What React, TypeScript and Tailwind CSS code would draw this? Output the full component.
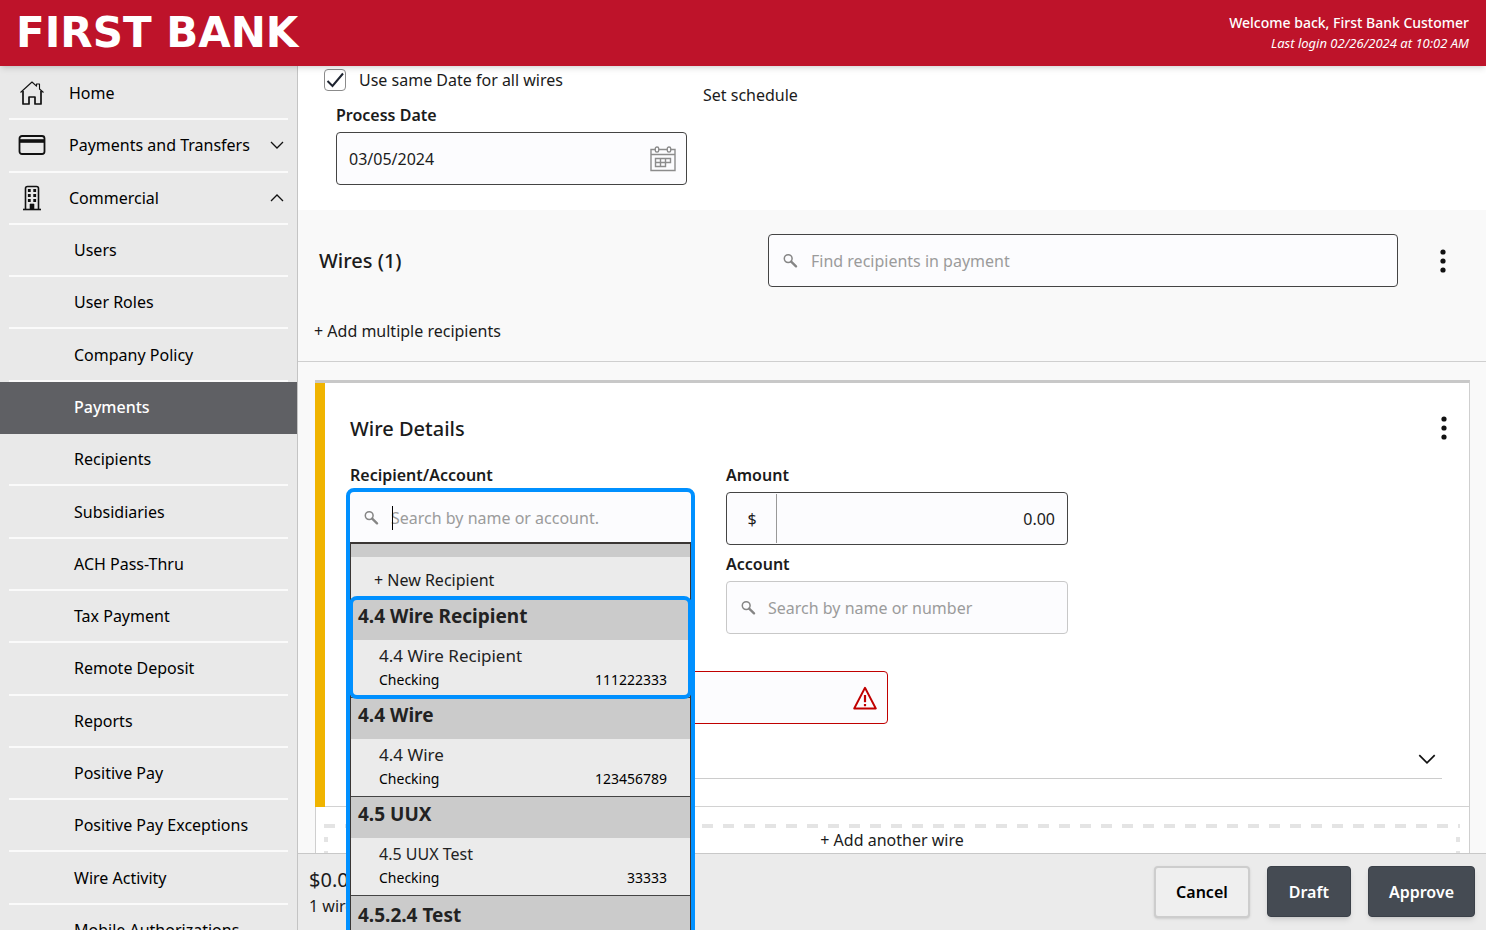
import { useState } from "react";

const subItems = [
  "Users",
  "User Roles",
  "Company Policy",
  "Payments",
  "Recipients",
  "Subsidiaries",
  "ACH Pass-Thru",
  "Tax Payment",
  "Remote Deposit",
  "Reports",
  "Positive Pay",
  "Positive Pay Exceptions",
  "Wire Activity",
  "Mobile Authorizations",
];

const recipients = [
  { group: "4.4 Wire Recipient", name: "4.4 Wire Recipient", type: "Checking", account: "111222333", large: true },
  { group: "4.4 Wire", name: "4.4 Wire", type: "Checking", account: "123456789", large: true },
  { group: "4.5 UUX", name: "4.5 UUX Test", type: "Checking", account: "33333", large: false },
];

const HomeIcon = () => (
  <svg width="26" height="26" viewBox="0 0 26 26" fill="none" stroke="#111" strokeLinejoin="round">
    <path d="M1.5 12.5 13 2l4.5 4.2V4h3v5l4 3.5" strokeWidth="1.1" />
    <path d="M4 11v13h6v-7h6v7h6V11" strokeWidth="1.7" />
  </svg>
);

const CardIcon = () => (
  <svg width="28" height="20" viewBox="0 0 28 20" fill="none" stroke="#111">
    <rect x="1.5" y="1" width="25" height="18" rx="2.5" strokeWidth="1.8" />
    <path d="M1 6h26" strokeWidth="3.6" />
  </svg>
);

const BuildingIcon = () => (
  <svg width="20" height="26" viewBox="0 0 20 26" fill="none" stroke="#111">
    <path d="M3.5 24V3.5q0-2 2-2h9q2 0 2 2V24" strokeWidth="1.6" />
    <path d="M1 24.5h18" strokeWidth="1.6" />
    <path d="M8 24v-5h4v5z" fill="#111" strokeWidth="0.6" />
    <path d="M7.3 4v3M12.7 4v3M7.3 9v3M12.7 9v3M7.3 14v3M12.7 14v3" strokeWidth="2.8" />
  </svg>
);

const Chevron = ({ up = false, size = 14 }: { up?: boolean; size?: number }) => (
  <svg width={size} height={size} viewBox="0 0 14 14" fill="none" stroke="#111" strokeWidth="1.3" className={up ? "rotate-180" : ""}>
    <path d="M1 4l6 6 6-6" />
  </svg>
);

const SearchIcon = () => (
  <svg width="15" height="15" viewBox="0 0 15 15" fill="none" stroke="#858585" className="shrink-0">
    <circle cx="5.2" cy="5.6" r="3.9" strokeWidth="1.5" />
    <path d="M8.2 8.6l4.8 4.8" strokeWidth="2.3" strokeLinecap="round" />
  </svg>
);

const CalendarIcon = () => (
  <svg width="26" height="26" viewBox="0 0 26 26" fill="none" stroke="#8c8c8c" strokeWidth="1.4">
    <path d="M5 3.5H1v21h24v-21h-4M9 3.5h8M1 8.5h24" />
    <rect x="5.3" y="1" width="3.4" height="5" rx="1.6" />
    <rect x="17.3" y="1" width="3.4" height="5" rx="1.6" />
    <path d="M5.5 12.5h15v4h-5v4h-10zM5.5 16.5h10M10.5 12.5v8M15.5 12.5v4" />
  </svg>
);

const AlertIcon = () => (
  <svg width="24" height="24" viewBox="0 0 24 24" fill="none" stroke="#c00000">
    <path d="M12 1.8 22.8 22.5H1.2z" strokeWidth="1.9" strokeLinejoin="round" />
    <path d="M12 9v7.2" strokeWidth="2.2" />
    <path d="M12 18v2.2" strokeWidth="2.2" />
  </svg>
);

const Dots = () => (
  <svg width="8" height="26" viewBox="0 0 8 26" fill="#111">
    <circle cx="4" cy="4" r="2.6" />
    <circle cx="4" cy="13" r="2.6" />
    <circle cx="4" cy="22" r="2.6" />
  </svg>
);

function Sidebar() {
  const [active, setActive] = useState("Payments");
  const topRow = "flex flex-1 items-center mx-[9px] border-b-2 border-[#fafafa]";

  return (
    <aside className="w-[298px] shrink-0 bg-[#e9e9e9] border-r border-[#c4c4c4] pt-0.5">
      <nav className="flex flex-col h-[889px] text-black">
        <a href="#home" className={topRow}>
          <span className="w-[46px] flex justify-center"><HomeIcon /></span>
          <span className="ml-[14px]">Home</span>
        </a>
        <a href="#transfers" className={topRow}>
          <span className="w-[46px] flex justify-center"><CardIcon /></span>
          <span className="ml-[14px] flex-1">Payments and Transfers</span>
          <span className="mr-1"><Chevron /></span>
        </a>
        <a href="#commercial" className={topRow}>
          <span className="w-[46px] flex justify-center"><BuildingIcon /></span>
          <span className="ml-[14px] flex-1">Commercial</span>
          <span className="mr-1"><Chevron up /></span>
        </a>
        {subItems.map((item) => (
          <a
            key={item}
            href="#commercial"
            onClick={() => setActive(item)}
            className={item === active ? "flex flex-1 items-center pl-[74px] border-b-2 border-[#5f6064] bg-[#5f6064] text-white font-medium" : "flex flex-1 items-center pl-[65px] mx-[9px] border-b-2 border-[#fafafa]"}
          >
            {item}
          </a>
        ))}
      </nav>
    </aside>
  );
}

function RecipientPicker() {
  return (
    <div className="relative h-[53px] z-20">
      <div className="absolute inset-x-0 top-0 rounded-sm outline-4 outline-[#0090ff] bg-[#fcfcfe]">
        <div className="relative flex items-center h-[50px] pt-px pl-[14px]">
          <SearchIcon />
          <input id="recipient" placeholder="Search by name or account." className="ml-3 flex-1 min-w-0 outline-none placeholder:text-[#9b9b9b]" />
          {/* caret */}
          <span className="absolute left-[42px] top-[14px] h-6 w-px bg-black"></span>
        </div>
        <div className="border-t-2 border-x border-[#3a3634] bg-[#ebebeb]">
          <div className="h-[13px] bg-[#cbcbcb]"></div>
          <button className="block w-full h-[41px] pt-1 pl-[23px] text-left">+ New Recipient</button>
          {recipients.map((r, i) => (
            <button
              key={r.group}
              className={i === 0 ? "relative z-10 block w-full text-left border-t border-[#444] rounded-md outline-4 -outline-offset-2 outline-[#0090ff]" : "block w-full text-left border-t border-[#444]"}
            >
              <div className="h-[41px] bg-[#cbcbcb] pt-[3px] pl-[7px] text-[19px] leading-7 font-bold text-[#222]">{r.group}</div>
              <div className="h-[57px] pt-1 pl-7 pr-[23px]">
                <div className={r.large ? "text-[17px] leading-6 text-[#222]" : "text-base leading-6 text-[#222]"}>{r.name}</div>
                <div className="flex justify-between text-sm leading-6 text-black">
                  <span>{r.type}</span>
                  <span>{r.account}</span>
                </div>
              </div>
            </button>
          ))}
          <div className="h-[41px] bg-[#cbcbcb] border-t border-[#444] pt-[5px] pl-[7px] text-[19px] leading-7 font-bold text-[#222]">4.5.2.4 Test</div>
        </div>
      </div>
    </div>
  );
}

function WireCard() {
  return (
    <div className="ml-[17px] mr-4 mt-[18px] border-t-3 border-r border-t-[#c8c8c8] border-r-[#cfcfcf] bg-white">
      <div className="border-l-10 border-[#f0b400]">
        <div className="border-b border-[#d2d2d2] pl-[25px] pr-[27px] pt-8 pb-[27px]">
          <div className="flex items-start justify-between">
            <h2 className="text-xl leading-7 font-medium">Wire Details</h2>
            <button aria-label="Wire options" className="-mr-1.5"><Dots /></button>
          </div>
          <div className="flex gap-[35px] mt-5">
            <div className="w-[341px]">
              <label htmlFor="recipient" className="block h-6 mb-[5px] font-semibold">Recipient/Account</label>
              <RecipientPicker />
            </div>
            <div className="w-[342px]">
              <label htmlFor="amount" className="block h-6 mb-[5px] font-semibold">Amount</label>
              <div className="flex h-[53px] p-px border border-[#444] rounded-sm bg-[#fcfcfe]">
                <span className="w-[49px] flex items-center justify-center border-r border-[#999]">$</span>
                <input id="amount" defaultValue="0.00" className="flex-1 min-w-0 pr-[11px] text-right outline-none" />
              </div>
              <label htmlFor="account" className="block h-6 mt-[7px] mb-[5px] font-semibold">Account</label>
              <div className="flex items-center h-[53px] pl-[14px] border border-[#c8c8c8] rounded-sm bg-[#fcfcfe]">
                <SearchIcon />
                <input id="account" placeholder="Search by name or number" className="ml-3 flex-1 min-w-0 outline-none placeholder:text-[#9b9b9b]" />
              </div>
            </div>
          </div>
          <div className="flex items-center w-[538px] h-[53px] mt-[37px] pl-3 pr-[10px] border border-[#c00000] rounded-sm bg-[#fcfcfe]">
            <input aria-label="Message to beneficiary" className="flex-1 min-w-0 outline-none" />
            <AlertIcon />
          </div>
          <button aria-label="Optional wire information" className="flex items-center justify-end w-full h-[55px] pt-4 pr-[6px] border-b border-[#ccc]">
            <Chevron size={18} />
          </button>
        </div>
      </div>
      <div className="border-l border-[#cfcfcf] pt-[17px] pl-2 pr-[9px]">
        <div className="h-1 bg-[repeating-linear-gradient(90deg,#e4e4e4_0_11px,transparent_11px_21px)]"></div>
        <div className="flex justify-between">
          <div className="w-1 bg-[repeating-linear-gradient(transparent_0_9px,#e4e4e4_9px_14px)]"></div>
          <button className="flex-1 h-16 pb-10 text-center">+ Add another wire</button>
          <div className="w-1 bg-[repeating-linear-gradient(transparent_0_9px,#e4e4e4_9px_14px)]"></div>
        </div>
      </div>
    </div>
  );
}

export default function App() {
  const [sameDate, setSameDate] = useState(true);

  return (
    <div className="h-screen overflow-hidden flex flex-col bg-[#f9f9f9] text-base text-[#1b1b1b] font-['Noto_Sans',sans-serif]">
      <header className="relative z-10 shrink-0 h-[66px] flex items-center justify-between pl-4 pr-[17px] bg-[#be132a] text-white shadow-md">
        <div className="font-['DejaVu_Sans',sans-serif] font-bold text-[42px] leading-none">FIRST BANK</div>
        <div className="text-right leading-5">
          <p className="text-sm leading-5 font-medium">Welcome back, First Bank Customer</p>
          <p className="text-[13px] leading-5 italic">Last login 02/26/2024 at 10:02 AM</p>
        </div>
      </header>

      <div className="flex flex-1 min-h-0">
        <Sidebar />
        <main className="flex-1 min-w-0 flex flex-col">
          <div className="flex-1 min-h-0">
            {/* date */}
            <section className="flex gap-4 bg-white pl-[26px] pt-0.5 pb-[25px]">
              <div>
                <label className="flex items-center gap-[13px] h-6">
                  <span className="grid">
                    <input
                      type="checkbox"
                      checked={sameDate}
                      onChange={() => setSameDate(!sameDate)}
                      className="appearance-none col-start-1 row-start-1 size-[22px] rounded-sm border border-[#8b8b8b] bg-white"
                    />
                    {sameDate && (
                      <svg viewBox="0 0 22 22" className="col-start-1 row-start-1 size-[22px] pointer-events-none" fill="none" stroke="#1e2430" strokeWidth="2">
                        <path d="M3.5 12l5 5L19 4.5" />
                      </svg>
                    )}
                  </span>
                  Use same Date for all wires
                </label>
                <div className="ml-3 mt-[11px] w-[351px]">
                  <label htmlFor="process-date" className="block h-6 mb-[5px] font-semibold">Process Date</label>
                  <div className="flex items-center h-[53px] pl-3 pr-[10px] border border-[#444] rounded-sm bg-[#fcfcfe]">
                    <input id="process-date" defaultValue="03/05/2024" className="flex-1 min-w-0 outline-none" />
                    <button aria-label="Open calendar"><CalendarIcon /></button>
                  </div>
                </div>
              </div>
              <div className="pt-[15px]">
                <button>Set schedule</button>
              </div>
            </section>

            {/* wires */}
            <section className="pt-6 pb-[18px] border-b border-[#cfcfcf]">
              <div className="flex items-center pl-[21px] pr-[39px]">
                <h1 className="w-[449px] text-xl font-medium">Wires (1)</h1>
                <label className="flex flex-1 items-center h-[53px] pl-[14px] border border-[#444] rounded-sm bg-[#fcfcfe]">
                  <SearchIcon />
                  <input aria-label="Find recipients" placeholder="Find recipients in payment" className="ml-[13px] flex-1 min-w-0 outline-none placeholder:text-[#9b9b9b]" />
                </label>
                <button aria-label="Payment options" className="ml-[41px]"><Dots /></button>
              </div>
              <button className="block h-6 mt-8 ml-4">+ Add multiple recipients</button>
            </section>

            <WireCard />
          </div>

          <footer className="relative z-10 shrink-0 flex items-center justify-between h-[77px] px-[11px] bg-[#ebebeb] border-t border-[#c8c8c8]">
            <div>
              <p className="text-xl leading-7">$0.00</p>
              <p>1 wire</p>
            </div>
            <div className="flex gap-[17px] font-semibold">
              <button className="h-[52px] px-5 rounded-sm border-2 border-[#cdcdcd] bg-[#efefef] text-black shadow">Cancel</button>
              <button className="h-[51px] px-[21px] rounded-sm border border-[#3b4149] bg-[#454b53] text-white shadow-md">Draft</button>
              <button className="h-[51px] px-5 rounded-sm border border-[#3b4149] bg-[#454b53] text-white shadow-md">Approve</button>
            </div>
          </footer>
        </main>
      </div>
    </div>
  );
}
